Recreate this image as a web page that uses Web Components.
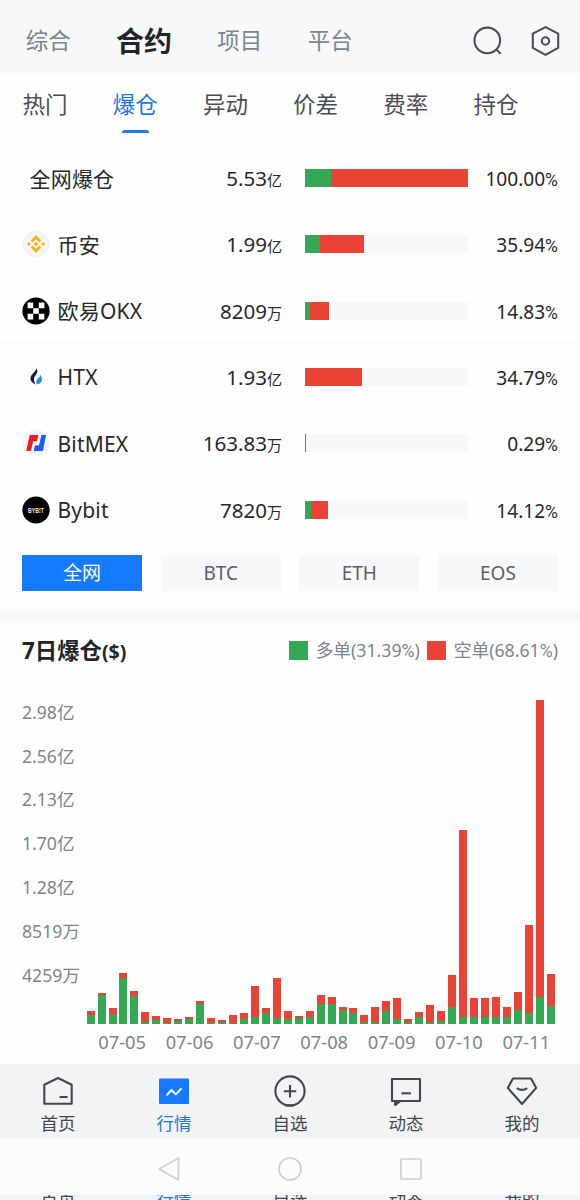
<!DOCTYPE html>
<html lang="zh-CN">
<head>
<meta charset="utf-8">
<meta name="viewport" content="width=device-width, initial-scale=1">
<title>合约 - 爆仓</title>
<style>
  body {
    margin: 0;
    background: #fefefe;
    color: #26282c;
    font-family: "Noto Sans", "Noto Sans CJK SC", sans-serif;
    --long: #34a853;
    --short: #ea4335;
    --blue: #167aff;
    --panel: #f6f8fa;
    --muted: #7b858f;
  }
</style>
</head>
<body>
<market-app>
  <market-header slot="header">
    <span>综合</span>
    <span class="active">合约</span>
    <span>项目</span>
    <span>平台</span>
  </market-header>
  <sub-tabs slot="header" items="热门,爆仓,异动,价差,费率,持仓" active="1"></sub-tabs>

  <exchange-row value="5.53" unit="亿" pct="100.00" long="16" short="84">全网爆仓</exchange-row>
  <exchange-row logo="binance" value="1.99" unit="亿" pct="35.94" long="8.9" short="27.0">币安</exchange-row>
  <exchange-row logo="okx" value="8209" unit="万" pct="14.83" long="3" short="11.8">欧易OKX</exchange-row>
  <exchange-row logo="htx" value="1.93" unit="亿" pct="34.79" long="0.9" short="33.9">HTX</exchange-row>
  <exchange-row logo="bitmex" value="163.83" unit="万" pct="0.29" long="0.14" short="0.15">BitMEX</exchange-row>
  <exchange-row logo="bybit" value="7820" unit="万" pct="14.12" long="3.6" short="10.5">Bybit</exchange-row>

  <coin-filter items="全网,BTC,ETH,EOS" active="0"></coin-filter>
  <liquidation-chart long="31.39" short="68.61"></liquidation-chart>

  <tab-bar slot="footer"></tab-bar>
  <system-nav slot="footer"></system-nav>
  <tab-peek slot="footer"></tab-peek>
</market-app>

<script>
class MarketApp extends HTMLElement {
  constructor() {
    super();
    this.attachShadow({ mode: "open" });
    this.shadowRoot.innerHTML = `
    <style>
        :host {
            display: flex;
            flex-direction: column;
            width: 580px;
            height: 1200px;
            overflow: hidden;
        }
        main { flex: 1; min-height: 0; }
    </style>
    <slot name="header"></slot>
    <main><slot></slot></main>
    <slot name="footer"></slot>
    `;
  }
}

class MarketHeader extends HTMLElement {
  constructor() {
    super();
    this.attachShadow({ mode: "open" });
    this.shadowRoot.innerHTML = `
    <style>
        :host {
            display: flex;
            align-items: center;
            gap: 45.3px;
            height: 73px;
            padding: 9px 19px 0 25.7px;
            box-sizing: border-box;
            flex: none;
            background: var(--panel);
        }
        ::slotted(span) {
            font-size: 22.5px;
            line-height: 30px;
            color: var(--muted);
        }
        ::slotted(.active) {
            font-size: 28px;
            font-weight: bold;
            color: #222428;
        }
        .icons { display: flex; gap: 26px; margin: -1px 0 0 auto; }
        svg { display: block; width: 32px; height: 32px; fill: none; stroke: #4b4f55; stroke-width: 2.1; }
    </style>
    <slot></slot>
    <div class="icons">
      <svg viewBox="0 0 32 32"><circle cx="16.3" cy="15.4" r="12.8"/><path d="M25.3 24.4l4.4 4.4"/></svg>
      <svg viewBox="0 0 32 32"><path d="M16.5 2.1l12.7 6.5v14.2l-12.7 7.1-12.7-7.1V8.6z" stroke-linejoin="round"/><circle cx="16.5" cy="16" r="3.7"/></svg>
    </div>
    `;
  }
}

class SubTabs extends HTMLElement {
  constructor() {
    super();
    this.attachShadow({ mode: "open" });
  }

  connectedCallback() {
    const active = Number(this.getAttribute("active"));
    const items = this.getAttribute("items").split(",");
    this.shadowRoot.innerHTML = `
    <style>
        :host {
            display: flex;
            gap: 45.2px;
            height: 72.4px;
            padding: 0 22.5px;
            box-sizing: border-box;
            flex: none;
        }
        .tab {
            display: flex;
            flex-direction: column;
            align-items: center;
            padding-top: 16px;
            font-size: 22.5px;
            line-height: 32px;
            color: #4b4f55;
        }
        .active { color: #1f78e0; }
        .active::after {
            content: "";
            width: 27px;
            height: 3.5px;
            margin-top: 8.5px;
            border-radius: 3px 3px 0 0;
            background: #2878e0;
        }
    </style>
    ${items.map((t, i) => `<div class="tab${i === active ? " active" : ""}">${t}</div>`).join("")}
    `;
  }
}

const LOGOS = {
  binance: `<circle cx="14" cy="14" r="13.6" fill="#f4f4f6"/>
    <g fill="#f5b51c"><path d="M14 5l5.4 5.4-2.1 2.1L14 9.2l-3.3 3.3-2.1-2.1zM14 23l5.4-5.4-2.1-2.1-3.3 3.3-3.3-3.3-2.1 2.1zM7 11.9l2.1 2.1L7 16.1 4.9 14zM21 11.9l2.1 2.1-2.1 2.1-2.1-2.1zM14 11.7l2.3 2.3-2.3 2.3-2.3-2.3z"/></g>`,
  okx: `<circle cx="14" cy="14" r="13.6" fill="#000"/>
    <path fill="#fff" d="M5.6 5.6h5.6v5.6H5.6zM16.8 5.6h5.6v5.6h-5.6zM11.2 11.2h5.6v5.6h-5.6zM5.6 16.8h5.6v5.6H5.6zM16.8 16.8h5.6v5.6h-5.6z"/>`,
  htx: `<path fill="#161a3c" d="M14.2 5.3c2.1 3.1 1 4.9-.7 7-1.7 2.1-2.2 5 .1 9.1-4.2-1.6-6.3-5-4.4-8.6 1.5-2.9 4.5-3.8 5-7.5z"/>
    <path fill="#2b90c8" d="M18.4 11.5c.3 1.5 1.9 2.7 1.6 5.2-.3 2.8-2.3 4.6-5.1 4.6-1.5-2.2-.6-4 .8-5.6 1.2-1.3 2.5-2 2.7-4.2z"/>`,
  bitmex: `<circle cx="14" cy="14" r="13.6" fill="#f4f4f6"/>
    <path fill="#ee1c1c" d="M7.7 6h8.7l-1.4 6.2h-3.9L8.9 22H4.2z"/>
    <path fill="#1c5cf0" d="M19.4 6h4.7l-3.2 16h-9.2l1.2-5.6h4.1z"/>`,
  bybit: `<circle cx="14" cy="14" r="13.6" fill="#000"/>
    <text x="14" y="16.6" text-anchor="middle" font-family="Liberation Sans, sans-serif" font-weight="bold" font-size="7.4" textLength="16" lengthAdjust="spacingAndGlyphs" fill="#e8e8e8">BYB!T</text>`
};

class ExchangeRow extends HTMLElement {
  constructor() {
    super();
    this.attachShadow({ mode: "open" });
  }

  connectedCallback() {
    const logo = LOGOS[this.getAttribute("logo")];
    this.shadowRoot.innerHTML = `
    <style>
        :host {
            display: grid;
            grid-template-columns: 160px 100px 163px 1fr;
            align-items: center;
            height: 66.3px;
            padding: 0 22px;
            box-sizing: border-box;
            border-bottom: 1px solid #f7f8f9;
            font-size: 21px;
            line-height: 30px;
            white-space: nowrap;
        }
        .name { display: flex; align-items: center; gap: 7.5px; padding-left: ${logo ? 0 : 7.5}px; }
        .name span { padding-top: 1px; letter-spacing: 0.2px; }
        svg { display: block; width: 28px; height: 28px; }
        .value, .pct { text-align: right; padding-top: 2px; }
        .value { font-size: 20.5px; }
        .value small { font-size: 15px; }
        .track {
            display: flex;
            height: 18px;
            margin-left: 23px;
            width: 163px;
            background: #f7f8fa;
        }
        .long { background: var(--long); width: ${this.getAttribute("long")}%; }
        .short { background: var(--short); width: ${this.getAttribute("short")}%; }
        .pct { font-size: 19.1px; }
        .pct small { font: 17.6px/1 Roboto, sans-serif; }
    </style>
    <div class="name">${logo ? `<svg viewBox="0 0 28 28">${logo}</svg>` : ""}<span><slot></slot></span></div>
    <div class="value">${this.getAttribute("value")}<small>${this.getAttribute("unit")}</small></div>
    <div class="track"><div class="long"></div><div class="short"></div></div>
    <div class="pct">${this.getAttribute("pct")}<small>%</small></div>
    `;
  }
}

class CoinFilter extends HTMLElement {
  constructor() {
    super();
    this.attachShadow({ mode: "open" });
  }

  connectedCallback() {
    const active = Number(this.getAttribute("active"));
    const items = this.getAttribute("items").split(",");
    this.shadowRoot.innerHTML = `
    <style>
        :host {
            display: grid;
            grid-template-columns: repeat(4, 1fr);
            gap: 18.5px;
            padding: 11.8px 22px 18.4px;
            border-bottom: 12px solid var(--panel);
        }
        div {
            height: 36px;
            line-height: 36.5px;
            text-align: center;
            font-size: 19px;
            color: #5a5f66;
            background: #f7f8fa;
        }
        .active { color: #fff; background: var(--blue); }
    </style>
    ${items.map((t, i) => `<div class="${i === active ? "active" : ""}">${t}</div>`).join("")}
    `;
  }
}

// [total, long] for every 4 hours, 3 units = 1px
const BARS = [
  [39, 28], [93, 87], [50, 30], [153, 139], [99, 85], [38, 6], [26, 14],
  [19, 5], [16, 11], [23, 17], [71, 60], [19, 4], [12, 6], [29, 5],
  [35, 16], [115, 21], [49, 35], [140, 20], [39, 16], [26, 19], [40, 22],
  [89, 61], [83, 60], [53, 44], [50, 35], [28, 8], [51, 8], [70, 40],
  [79, 16], [16, 6], [38, 22], [58, 8], [41, 11], [149, 53], [583, 22],
  [80, 22], [79, 23], [82, 22], [53, 23], [98, 43], [297, 33], [973, 81],
  [151, 56]
];
const LEVELS = ["2.98亿", "2.56亿", "2.13亿", "1.70亿", "1.28亿", "8519万", "4259万"];
const DAYS = ["07-05", "07-06", "07-07", "07-08", "07-09", "07-10", "07-11"];

class LiquidationChart extends HTMLElement {
  constructor() {
    super();
    this.attachShadow({ mode: "open" });
  }

  connectedCallback() {
    this.shadowRoot.innerHTML = `
    <style>
        :host { display: block; font-size: 17.6px; color: var(--muted); }
        header {
            display: flex;
            align-items: center;
            height: 58px;
            padding: 0 22px;
            white-space: nowrap;
        }
        h2 { margin: 0 auto 0 0; padding-top: 2px; font-size: 22.4px; line-height: 30px; color: #222428; }
        h2 small { font-size: 19.5px; }
        .key { display: flex; align-items: center; gap: 7.5px; margin-left: 7.5px; font-size: 17.7px; line-height: 26px; }
        .key > span { padding-top: 1px; }
        .key i { width: 19px; height: 19px; }
        .pc { font-family: Roboto, sans-serif; }
        .plot { display: flex; height: 345px; padding-left: 22px; }
        .levels { width: 64.6px; padding-top: 11.5px; box-sizing: border-box; white-space: nowrap; }
        .levels div { height: 43.8px; line-height: 43.8px; }
        .bars { display: flex; align-items: flex-end; gap: 2.96px; }
        .bar { display: flex; flex-direction: column; width: 8px; }
        .l { background: var(--long); }
        .s { background: var(--short); }
        .days { display: grid; grid-template-columns: repeat(7, 67.35px); padding-left: 88.5px; text-align: center; font-size: 18.3px; line-height: 36px; }
    </style>
    <header>
      <h2>7日爆仓<small>($)</small></h2>
      <div class="key"><i class="l"></i><span>多单(${this.getAttribute("long")}<span class="pc">%</span>)</span></div>
      <div class="key"><i class="s"></i><span>空单(${this.getAttribute("short")}<span class="pc">%</span>)</span></div>
    </header>
    <div class="plot">
      <div class="levels">${LEVELS.map(t => `<div>${t}</div>`).join("")}</div>
      <div class="bars">${BARS.map(([total, long]) => `
        <div class="bar">
          <div class="s" style="height:${(total - long) / 3}px"></div>
          <div class="l" style="height:${long / 3}px"></div>
        </div>`).join("")}
      </div>
    </div>
    <div class="days">${DAYS.map(d => `<span>${d}</span>`).join("")}</div>
    `;
  }
}

const TABS = [
  ["首页", `<path d="M2.3 9.8L16 3l13.7 6.8v19H2.3z"/><path d="M17.6 22h8"/>`],
  ["行情", `<rect x="1" y="3.4" width="30" height="25.6" rx="1" fill="#167aff" stroke="none"/><path d="M8.5 20.4l5-5.4 4.3 4.4 5.7-6" stroke="#fff" stroke-width="2"/>`],
  ["自选", `<circle cx="16" cy="16" r="14.6"/><path d="M16 10v12.4M9.8 16.2h12.4M11 30.4h9"/>`],
  ["动态", `<path d="M2 4h28v22H10.5L5.3 29.6V26H2z"/><path d="M5.3 26v4l4.6-4z" fill="#44484e"/><path d="M11.5 18.3h9.5"/>`],
  ["我的", `<path d="M7 3.5h18l5.2 9.4L16 29 1.8 12.9z"/><path d="M10.8 13.2q5.3 3.4 10.4 0"/>`]
];

class TabBar extends HTMLElement {
  constructor() {
    super();
    this.attachShadow({ mode: "open" });
    this.shadowRoot.innerHTML = `
    <style>
        :host {
            display: grid;
            grid-template-columns: repeat(5, 1fr);
            height: 75px;
            flex: none;
            background: #f1f3f5;
        }
        div {
            display: flex;
            flex-direction: column;
            align-items: center;
            gap: 3px;
            padding-top: 11px;
            font-size: 17.5px;
            line-height: 26px;
            color: #44484e;
        }
        .active { color: #1f78d8; }
        svg { width: 32px; height: 32px; fill: none; stroke: #44484e; stroke-width: 2.1; stroke-linejoin: round; }
    </style>
    ${TABS.map(([t, icon], i) => `<div class="${i === 1 ? "active" : ""}"><svg viewBox="0 0 32 32">${icon}</svg>${t}</div>`).join("")}
    `;
  }
}

class SystemNav extends HTMLElement {
  constructor() {
    super();
    this.attachShadow({ mode: "open" });
    this.shadowRoot.innerHTML = `
    <style>
        :host {
            display: flex;
            justify-content: center;
            align-items: center;
            gap: 95px;
            height: 55.5px;
            padding-top: 5px;
            box-sizing: border-box;
            flex: none;
            background: #fcfcfc;
        }
        svg { width: 26px; height: 26px; fill: none; stroke: #cfcfcf; stroke-width: 1.7; stroke-linejoin: round; }
    </style>
    <svg viewBox="0 0 26 26"><path d="M22.5 2v22L3.2 13z"/></svg>
    <svg viewBox="0 0 26 26"><circle cx="13" cy="13" r="11"/></svg>
    <svg viewBox="0 0 26 26"><rect x="3" y="3" width="20" height="20" rx="1"/></svg>
    `;
  }
}

// strip of tab labels that shows under the system buttons
class TabPeek extends HTMLElement {
  constructor() {
    super();
    this.attachShadow({ mode: "open" });
    this.shadowRoot.innerHTML = `
    <style>
        :host {
            display: grid;
            grid-template-columns: repeat(5, 1fr);
            align-items: start;
            height: 5.5px;
            flex: none;
            overflow: hidden;
            background: #f1f3f5;
            text-align: center;
            font-size: 17.5px;
            line-height: 26px;
            color: #44484e;
        }
        span { margin-top: -9px; }
        .active { color: #1f78d8; }
    </style>
    ${TABS.map(([t], i) => `<span class="${i === 1 ? "active" : ""}">${t}</span>`).join("")}
    `;
  }
}

customElements.define("market-app", MarketApp);
customElements.define("market-header", MarketHeader);
customElements.define("sub-tabs", SubTabs);
customElements.define("exchange-row", ExchangeRow);
customElements.define("coin-filter", CoinFilter);
customElements.define("liquidation-chart", LiquidationChart);
customElements.define("tab-bar", TabBar);
customElements.define("system-nav", SystemNav);
customElements.define("tab-peek", TabPeek);
</script>
</body>
</html>
